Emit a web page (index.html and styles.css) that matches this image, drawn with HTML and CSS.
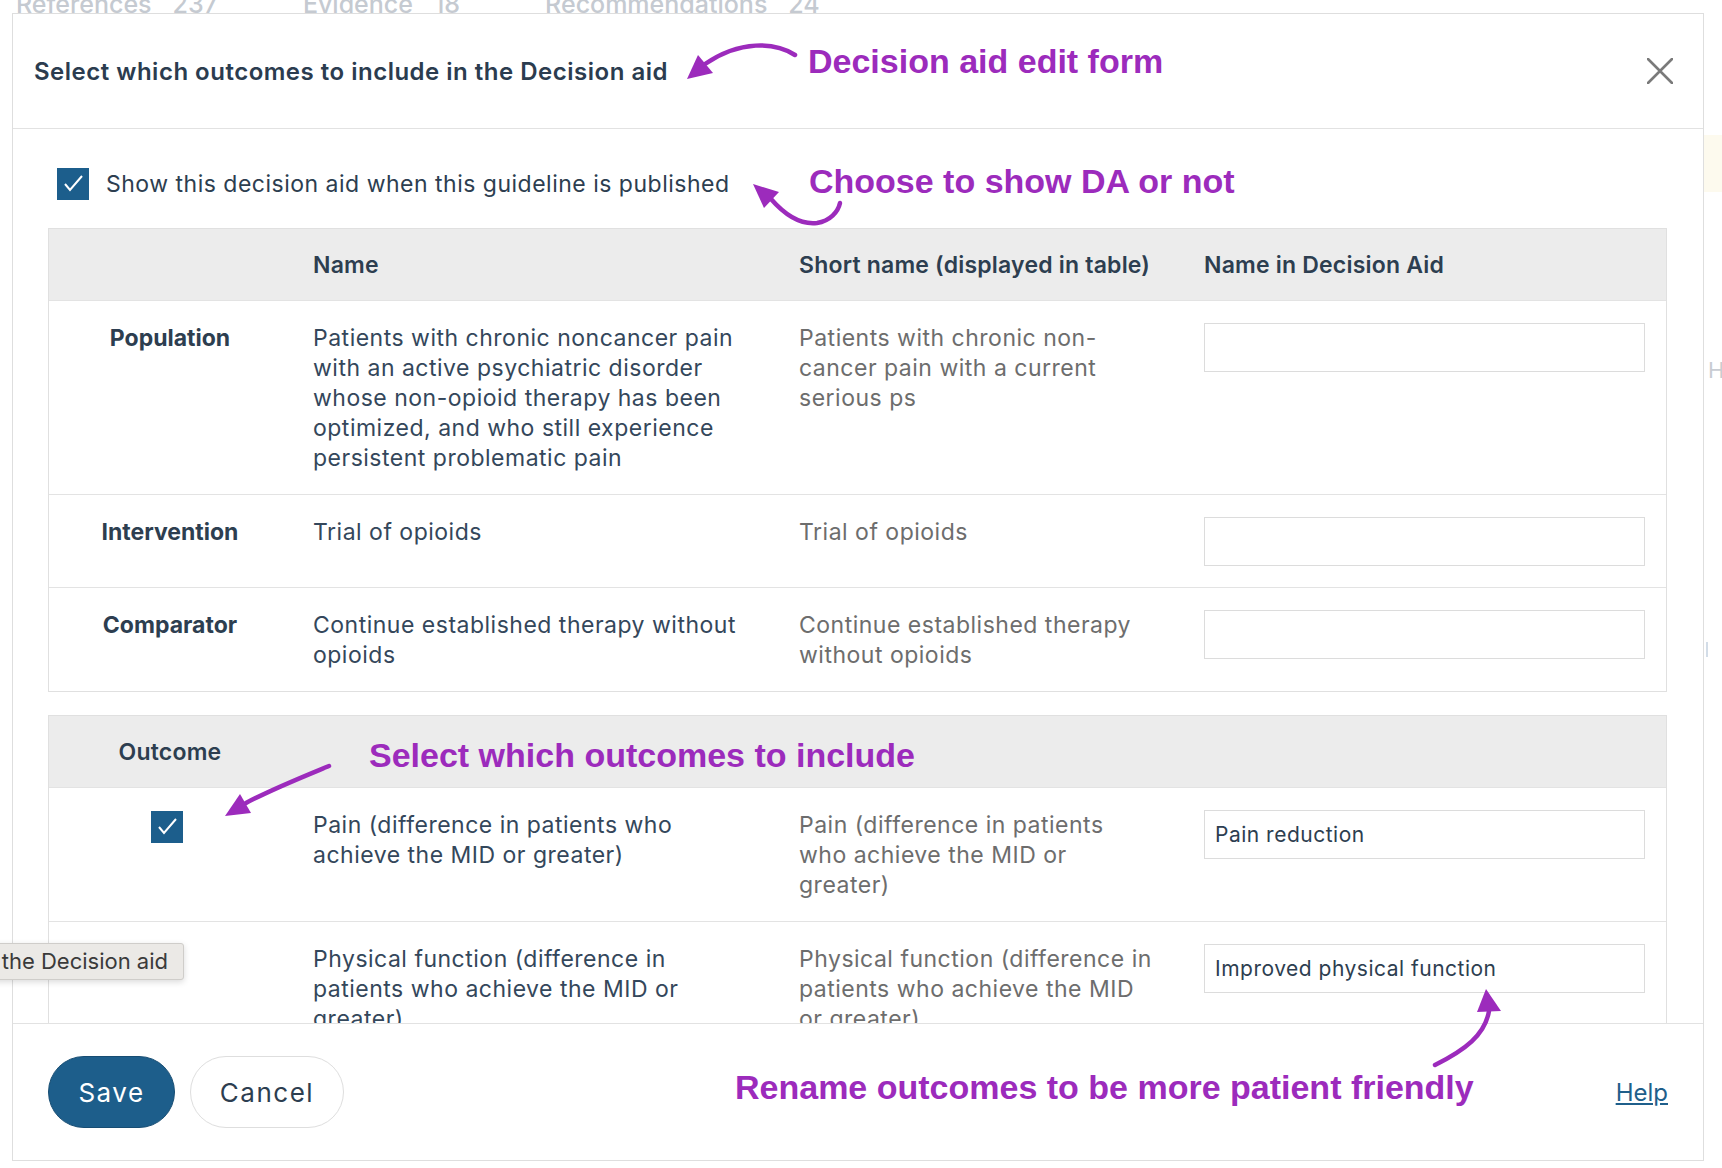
FILE: index.html
```html
<!DOCTYPE html>
<html lang="en">
<head>
  <meta charset="UTF-8" />
  <title>Decision aid edit form</title>
  <link rel="stylesheet" href="styles.css">
</head>
<body>

  <!-- page behind the modal -->
  <div class="page">
    <div class="page-tabs">
      <span class="page-tab">References<em>237</em></span>
      <span class="page-tab">Evidence<em>18</em></span>
      <span class="page-tab">Recommendations<em>24</em></span>
    </div>
    <div class="page-side">
      <div class="side-note"></div>
      <div class="side-letter">H</div>
      <div class="side-bar"></div>
    </div>
  </div>

  <!-- Modal -->
  <div class="modal">
    <div class="modal-header">
      <h2 class="modal-title">Select which outcomes to include in the Decision aid</h2>
      <button class="close-btn" aria-label="Close">
        <svg width="26" height="26" viewBox="0 0 26 26"><path d="M1 1 L25 25 M25 1 L1 25" stroke="#7a7a7a" stroke-width="2.6" stroke-linecap="round"/></svg>
      </button>
    </div>

    <div class="modal-body">
      <label class="publish-row">
        <span class="check"><svg width="32" height="32" viewBox="0 0 32 32"><polyline points="8,16 13,22 25,8" fill="none" stroke="#fff" stroke-width="2"/></svg></span>
        <span>Show this decision aid when this guideline is published</span>
      </label>

      <table class="da-table">
        <colgroup><col class="w1"><col class="w2"><col class="w3"><col class="w4"></colgroup>
        <tr>
          <th></th>
          <th>Name</th>
          <th>Short name (displayed in table)</th>
          <th>Name in Decision Aid</th>
        </tr>
        <tr>
          <td class="c-label">Population</td>
          <td class="c-name">Patients with chronic noncancer pain with an active psychiatric disorder whose non-opioid therapy has been optimized, and who still experience persistent problematic pain</td>
          <td class="c-short">Patients with chronic non-cancer pain with a current serious ps</td>
          <td class="c-da"><input class="da-input" type="text"></td>
        </tr>
        <tr>
          <td class="c-label">Intervention</td>
          <td class="c-name">Trial of opioids</td>
          <td class="c-short">Trial of opioids</td>
          <td class="c-da"><input class="da-input" type="text"></td>
        </tr>
        <tr>
          <td class="c-label">Comparator</td>
          <td class="c-name">Continue established therapy without opioids</td>
          <td class="c-short">Continue established therapy without opioids</td>
          <td class="c-da"><input class="da-input" type="text"></td>
        </tr>
      </table>

      <table class="da-table outcomes">
        <colgroup><col class="w1"><col class="w2"><col class="w3"><col class="w4"></colgroup>
        <tr>
          <th class="th-label">Outcome</th>
          <th></th>
          <th></th>
          <th></th>
        </tr>
        <tr>
          <td class="c-check"><span class="check"><svg width="32" height="32" viewBox="0 0 32 32"><polyline points="8,16 13,22 25,8" fill="none" stroke="#fff" stroke-width="2"/></svg></span></td>
          <td class="c-name">Pain (difference in patients who achieve the MID or greater)</td>
          <td class="c-short">Pain (difference in patients who achieve the MID or greater)</td>
          <td class="c-da"><input class="da-input" type="text" value="Pain reduction"></td>
        </tr>
        <tr>
          <td class="c-check"><span class="check empty"></span></td>
          <td class="c-name">Physical function (difference in patients who achieve the MID or greater)</td>
          <td class="c-short">Physical function (difference in patients who achieve the MID or greater)</td>
          <td class="c-da"><input class="da-input" type="text" value="Improved physical function"></td>
        </tr>
      </table>
    </div>

    <div class="modal-footer">
      <button class="btn btn-save">Save</button>
      <button class="btn btn-cancel">Cancel</button>
      <a class="help-link" href="#">Help</a>
    </div>
  </div>

  <!-- browser tooltip -->
  <div class="tooltip">Select which outcomes to include in the Decision aid</div>

  <!-- annotations -->
  <svg class="arrows" width="1722" height="1168" viewBox="0 0 1722 1168">
    <g fill="none" stroke="#9c2bbc" stroke-width="4.5" stroke-linecap="round">
      <path d="M795,55 C775,42 740,40 705,64"/>
      <path d="M771,199 C785,215 800,225 817,223 C830,221 838,212 840,203"/>
      <path d="M329,766 C300,778 270,790 246,803"/>
      <path d="M1435,1065 C1465,1050 1485,1035 1489,1011"/>
    </g>
    <g fill="#9c2bbc">
      <polygon points="687,79 698,55 713,73"/>
      <polygon points="753,184 779,192 764,208"/>
      <polygon points="225,816 240,794 251,813"/>
      <polygon points="1486,989 1477,1012 1501,1011"/>
    </g>
  </svg>
  <div class="note note-form">Decision aid edit form</div>
  <div class="note note-show">Choose to show DA or not</div>
  <div class="note note-outcomes">Select which outcomes to include</div>
  <div class="note note-rename">Rename outcomes to be more patient friendly</div>

</body>
</html>
```

FILE: styles.css
```css
body {
  font-family: Inter, "Noto Sans", sans-serif;
  background: #fff;
  color: #2d3e50;
  margin: 0;
  width: 1722px;
  height: 1168px;
  overflow: hidden;
  position: relative;
}

/* page behind */
.page-tabs {
  display: flex;
  gap: 85px;
  padding-left: 16px;
  margin-top: -10px;
  font-size: 25px;
  line-height: 28px;
  font-weight: 500;
  color: #c5cad1;
  white-space: nowrap;
}
.page-tab em {
  font-style: normal;
  margin-left: 21px;
}
.page-side {
  margin-left: 1704px;
  margin-top: 117px;
}
.side-note {
  height: 57px;
  background: #fdfaee;
}
.side-letter {
  margin-top: 163px;
  padding-left: 4px;
  font-size: 22px;
  line-height: 30px;
  color: #c8ccd2;
}
.side-bar {
  margin-top: 257px;
  margin-left: 2px;
  width: 2px;
  height: 15px;
  background: #d3dde8;
}

/* modal */
.modal {
  position: absolute;
  left: 12px;
  top: 13px;
  width: 1692px;
  height: 1148px;
  box-sizing: border-box;
  border: 1px solid #dedede;
  background: #fff;
  display: flex;
  flex-direction: column;
}
.modal-header {
  height: 115px;
  flex: none;
  box-sizing: border-box;
  border-bottom: 1px solid #e2e2e2;
  display: flex;
  align-items: center;
  justify-content: space-between;
  padding: 0 30px 0 21px;
}
.modal-title {
  margin: 0;
  font-size: 24px;
  font-weight: 600;
  letter-spacing: 0.5px;
  color: #2b3c4f;
}
.close-btn {
  border: none;
  background: none;
  padding: 0;
  width: 26px;
  height: 26px;
  cursor: pointer;
}
.modal-body {
  flex: 1;
  min-height: 0;
  overflow: hidden;
  padding: 39px 36px 0 35px;
}
.modal-footer {
  height: 137px;
  flex: none;
  box-sizing: border-box;
  border-top: 1px solid #e2e2e2;
  display: flex;
  align-items: center;
  gap: 15px;
  padding: 0 35px;
}

.publish-row {
  display: flex;
  align-items: center;
  gap: 17px;
  padding-left: 9px;
  font-size: 23px;
  letter-spacing: 0.5px;
  color: #2d3e50;
}
.check {
  width: 32px;
  height: 32px;
  box-sizing: border-box;
  background: #1c5e8c;
  display: inline-flex;
  flex: none;
}
.check.empty {
  background: #fff;
  border: 1px solid #b5b5b5;
}

/* tables */
.da-table {
  width: 100%;
  table-layout: fixed;
  border-collapse: separate;
  border-spacing: 0;
  border: 1px solid #e0e0e0;
  margin-top: 28px;
  font-size: 23px;
  line-height: 30px;
  letter-spacing: 0.5px;
}
.da-table.outcomes {
  margin-top: 23px;
}
.w1 { width: 264px; }
.w2 { width: 486px; }
.w3 { width: 405px; }
.w4 { width: 462px; }
.da-table th {
  background: #ececec;
  height: 71px;
  padding: 0;
  text-align: left;
  font-size: 23px;
  font-weight: 600;
  letter-spacing: 0.2px;
  color: #2d3e50;
  vertical-align: middle;
}
.da-table th.th-label {
  text-align: center;
  padding-right: 22px;
}
.da-table td {
  vertical-align: top;
  padding: 22px 0 21px 0;
  border-top: 1px solid #e3e3e3;
}
.da-table td.c-label {
  padding-right: 22px;
  text-align: center;
  font-weight: 700;
  letter-spacing: 0;
  color: #2d3e50;
}
.da-table td.c-check {
  padding-right: 28px;
  text-align: center;
}
.c-check .check {
  margin-top: 1px;
}
.da-table td.c-name {
  padding-right: 46px;
  color: #34475b;
}
.da-table td.c-short {
  padding-right: 49px;
  color: #6d6d6d;
}
.da-table td.c-da {
  padding-right: 21px;
}
.da-input {
  display: block;
  width: 100%;
  height: 49px;
  box-sizing: border-box;
  border: 1px solid #dcdcdc;
  padding: 0 10px;
  font-family: inherit;
  font-size: 21px;
  letter-spacing: 0.5px;
  color: #2d3e50;
  outline: none;
}

/* footer */
.btn {
  height: 72px;
  border-radius: 36px;
  font-family: inherit;
  font-size: 26px;
  letter-spacing: 1.5px;
  cursor: pointer;
}
.btn-save {
  width: 127px;
  background: #1d5e8b;
  border: 1px solid #174d73;
  color: #fff;
}
.btn-cancel {
  width: 154px;
  background: #fff;
  border: 1px solid #dedede;
  color: #2d3e50;
}
.help-link {
  margin-left: auto;
  font-size: 24px;
  color: #1f5f8b;
  text-decoration: underline;
}

/* tooltip */
.tooltip {
  position: absolute;
  right: 1538px;
  top: 943px;
  height: 37px;
  box-sizing: border-box;
  padding: 0 15px 0 12px;
  background: #ebe9e6;
  border: 1px solid #cfcdca;
  border-radius: 3px;
  box-shadow: 0 2px 6px rgba(0, 0, 0, 0.15);
  font-size: 22px;
  line-height: 35px;
  color: #3a3a3a;
  white-space: nowrap;
}

/* annotations */
.arrows {
  position: absolute;
  left: 0;
  top: 0;
  pointer-events: none;
}
.note {
  position: absolute;
  font-family: "Liberation Sans", Arial, sans-serif;
  font-weight: 700;
  font-size: 34px;
  line-height: 34px;
  color: #9c2bbc;
  white-space: nowrap;
}
.note-form { left: 808px; top: 44px; }
.note-show { left: 809px; top: 164px; }
.note-outcomes { left: 369px; top: 738px; }
.note-rename { left: 735px; top: 1070px; }
```
